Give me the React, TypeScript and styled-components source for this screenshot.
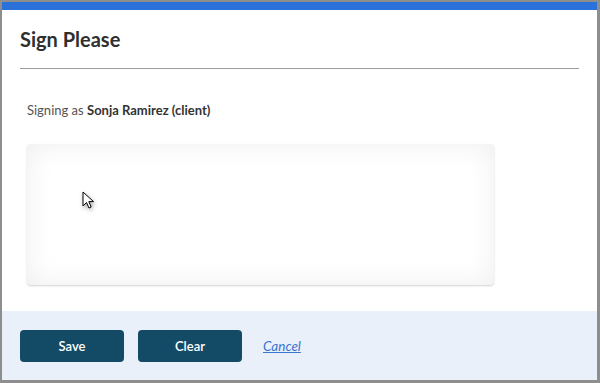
import React from "react";
import styled, { createGlobalStyle } from "styled-components";

const GlobalStyle = createGlobalStyle`
  html, body {
    margin: 0;
    padding: 0;
    background: #8e8e8e;
  }
  body {
    font-family: Lato, "Open Sans", Arial, sans-serif;
  }
`;

const Frame = styled.div`
  width: 600px;
  height: 383px;
  box-sizing: border-box;
  padding: 2px 3px 3px 2px;
  background: #8e8e8e;
`;

const Modal = styled.div`
  height: 100%;
  background: #fff;
  border-top: 8px solid #2a72d9;
  box-sizing: border-box;
  display: flex;
  flex-direction: column;
`;

const Header = styled.div`
  margin: 0 18px;
  padding: 17px 0 17px;
  border-bottom: 1px solid #9c9c9c;
`;

const Title = styled.h1`
  margin: 0;
  font-size: 20px;
  line-height: 24px;
  font-weight: 700;
  color: #2f2f2f;
`;

const Body = styled.div`
  flex: 1;
  padding: 33px 0 0 25px;
`;

const SigningAs = styled.p`
  margin: 0;
  font-size: 13px;
  line-height: 16px;
  color: #555;
  b {
    color: #333;
    font-weight: 700;
  }
`;

const Pad = styled.div`
  position: relative;
  margin-top: 26px;
  width: 467px;
  height: 141px;
  border-radius: 4px;
  background: #fff;
  box-shadow: inset 0 0 28px rgba(0, 0, 0, 0.07), 0 1px 2px rgba(0, 0, 0, 0.18);
`;

const Cursor = styled.svg`
  position: absolute;
  left: 55px;
  top: 47px;
  filter: drop-shadow(1px 2px 2px rgba(0, 0, 0, 0.35));
`;

const Footer = styled.div`
  height: 69px;
  background: #e9f0fa;
  display: flex;
  align-items: center;
  padding: 0 18px;
  gap: 14px;
`;

const Button = styled.button`
  width: 104px;
  height: 32px;
  border: none;
  border-radius: 4px;
  background: #134b67;
  color: #fff;
  font-family: Lato, Arial, sans-serif;
  font-size: 13px;
  font-weight: 600;
  cursor: pointer;
`;

const CancelLink = styled.a`
  margin-left: 7px;
  font-size: 13.5px;
  font-style: italic;
  color: #3a73d0;
  text-decoration: underline;
  cursor: pointer;
`;

export default function App() {
  return (
    <>
      <GlobalStyle />
      <Frame>
        <Modal>
          <Header>
            <Title>Sign Please</Title>
          </Header>
          <Body>
            <SigningAs>
              Signing as <b>Sonja Ramirez (client)</b>
            </SigningAs>
            <Pad>
              <Cursor width="14" height="20" viewBox="0 0 14 20">
                <path
                  d="M1 1 L1 15 L4.5 11.5 L7 17 L9.2 16 L6.8 10.6 L11.5 10.6 Z"
                  fill="#fff"
                  stroke="#000"
                  strokeWidth="1"
                  strokeLinejoin="round"
                />
              </Cursor>
            </Pad>
          </Body>
          <Footer>
            <Button>Save</Button>
            <Button>Clear</Button>
            <CancelLink>Cancel</CancelLink>
          </Footer>
        </Modal>
      </Frame>
    </>
  );
}
